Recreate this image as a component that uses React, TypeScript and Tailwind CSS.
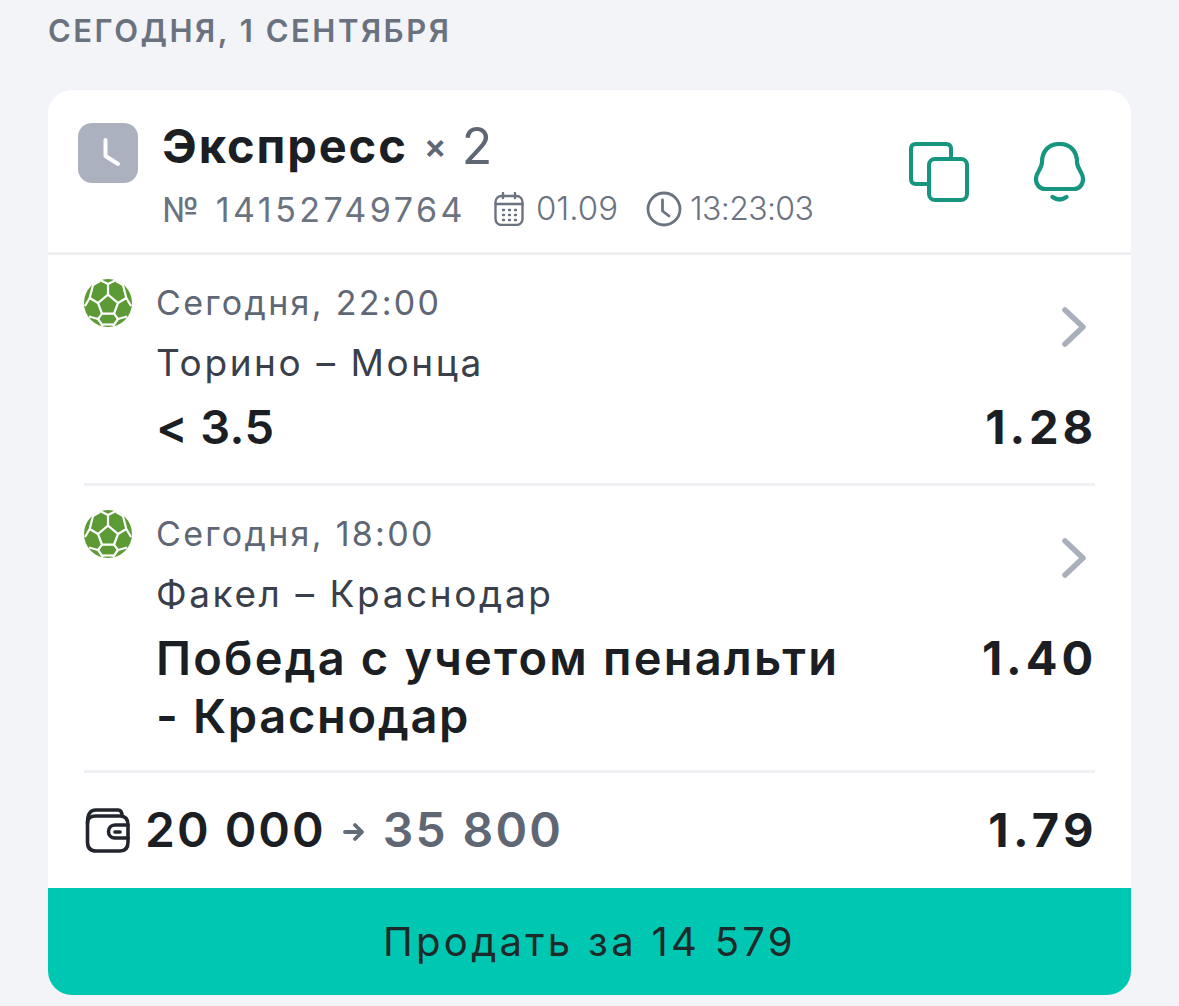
import React from "react";

const font = { fontFamily: '"Inter", "Noto Sans", sans-serif' };

function Ball() {
  return (
    <svg viewBox="0 0 48 48" className="w-12 h-12 shrink-0">
      <circle cx="24" cy="24" r="24" fill="#5c9a35" />
      <g stroke="#ffffff" strokeWidth="2.2" fill="none" strokeLinejoin="round">
        {/* centre panel and spokes */}
        <path d="M24 15.7 L34 24 L30 34.7 L18 34.7 L14 24 Z" />
        <path d="M24 15.7 V5 M14 24 L5.7 19 M34 24 L42.3 19 M18 34.7 L14 40 M30 34.7 L34 40" />
        {/* outer ring of panels */}
        <path d="M15 0.5 L24 5 L33 0.5" />
        <path d="M16 2 L9 6 L5.7 19 L1 27" />
        <path d="M32 2 L39 6 L42.3 19 L47 27" />
        <path d="M5 37.5 L14 40 L19 47 M43 37.5 L34 40 L29 47" />
        <path d="M19 45.5 H29" />
      </g>
    </svg>
  );
}

function Chevron() {
  return (
    <svg viewBox="0 0 26 40" className="w-[26px] h-[40px]" fill="none" stroke="#a9afbb" strokeWidth="5.5" strokeLinecap="round" strokeLinejoin="round">
      <path d="M5 3 L23 20 L5 37" />
    </svg>
  );
}

interface Bet {
  when: string;
  match: string;
  pick: React.ReactNode;
  odds: string;
}

const bets: Bet[] = [
  { when: "Сегодня, 22:00", match: "Торино – Монца", pick: <span className="tracking-[0.4px]">{"< 3.5"}</span>, odds: "1.28" },
  {
    when: "Сегодня, 18:00",
    match: "Факел – Краснодар",
    pick: (
      <>
        Победа с учетом пенальти
        <br />
        <span className="tracking-[1.7px]">- Краснодар</span>
      </>
    ),
    odds: "1.40",
  },
];

function BetRow({ bet }: { bet: Bet }) {
  return (
    <div className="flex border-b-[3px] border-[#eef0f3] pt-[24px] pb-[26px] last:pb-[24px]">
      <Ball />
      <div className="flex-1 ml-[24px] pr-[1px]">
        <div className="flex justify-between">
          <div>
            <div className="text-[34px] leading-[48px] text-[#5f6775] tracking-[2.3px]">{bet.when}</div>
            <div className="text-[37px] leading-[52px] mt-[10px] text-[#3a404b] tracking-[2.6px]">{bet.match}</div>
          </div>
          <div className="mr-[8px] mt-[28px]">
            <Chevron />
          </div>
        </div>
        <div className="flex justify-between items-start mt-[9px]">
          <div className="text-[47px] leading-[58.5px] font-semibold text-[#1b1e23] tracking-[2.2px]">{bet.pick}</div>
          <div className="text-[47px] leading-[58.5px] font-bold text-[#1b1e23] tracking-[3.9px] -mr-[3px]">{bet.odds}</div>
        </div>
      </div>
    </div>
  );
}

export default function App() {
  return (
    <div className="h-[1006px] overflow-hidden bg-[#f2f4f8] px-[48px] pt-[10px]" style={font}>
      <div className="h-[42px] leading-[42px] text-[31px] font-semibold text-[#6a7280] tracking-[2.5px]">
        СЕГОДНЯ, 1 СЕНТЯБРЯ
      </div>
      <div className="mt-[38px] h-[905px] bg-white rounded-[24px] overflow-hidden flex flex-col">
        <div className="h-[165px] shrink-0 border-b-[3px] border-[#eef0f3] flex pl-[30px] pr-[44px] pt-[33px]">
          <div className="w-[60px] h-[60px] rounded-[14px] bg-[#abb1bf] flex items-center justify-center">
            <svg viewBox="0 0 60 60" className="w-[60px] h-[60px]" fill="none" stroke="#ffffff" strokeWidth="4" strokeLinecap="round" strokeLinejoin="round">
              <path d="M27.5 17 V33 L40 41" />
            </svg>
          </div>
          <div className="ml-[24px] flex-1 -mt-[3px]">
            <div className="flex items-center h-[52px] leading-[52px]">
              <span className="text-[47px] font-bold text-[#1b1e23] tracking-[1.9px]">Экспресс</span>
              <span className="ml-[16px] text-[34px] font-semibold text-[#5f6775]">×</span>
              <span className="ml-[15px] text-[50px] text-[#5f6775]">2</span>
            </div>
            <div className="flex items-center mt-[15px] h-[44px] text-[#6c7380]">
              <span className="text-[34px] tracking-[3.5px]">№ 14152749764</span>
              <svg viewBox="0 0 30 34" className="ml-[28px] w-[30px] h-[34px]" fill="none" stroke="#6c7380" strokeWidth="2.4" strokeLinecap="round">
                <rect x="1.5" y="4" width="27" height="29" rx="6" />
                <path d="M1.5 12 H28.5 M9 1 V6 M21 1 V6" />
                <path d="M9 18 h1 M15 18 h1 M21 18 h1 M9 23 h1 M15 23 h1 M21 23 h1 M9 28 h1 M15 28 h1 M21 28 h1" />
              </svg>
              <span className="ml-[12px] text-[33px] font-light tracking-[0px]">01.09</span>
              <svg viewBox="0 0 36 36" className="ml-[28px] w-[36px] h-[36px]" fill="none" stroke="#6c7380" strokeWidth="2.8" strokeLinecap="round" strokeLinejoin="round">
                <circle cx="18" cy="18" r="16" />
                <path d="M16.5 9 V20 L23 25" />
              </svg>
              <span className="ml-[8px] text-[32px] font-light tracking-[-0.02em]">13:23:03</span>
            </div>
          </div>
          <div className="flex gap-[64px] pt-[19px]">
            <svg viewBox="0 0 60 60" className="w-[60px] h-[60px]" fill="none" stroke="#17967f" strokeWidth="4">
              <path d="M42 15 V7 Q42 2 37 2 H7 Q2 2 2 7 V37 Q2 42 7 42 H19" strokeLinecap="round" />
              <rect x="20" y="17" width="38" height="41" rx="6" />
            </svg>
            <svg viewBox="0 0 54 60" className="w-[54px] h-[60px]" fill="none" stroke="#17967f" strokeWidth="4.2" strokeLinecap="round">
              <path d="M26.5 2 C15 2 9 10 9 20 C9 27 3 30 3 37 C3 43 7 47 12 47 H41 C46 47 50 43 50 37 C50 30 44 27 44 20 C44 10 38 2 26.5 2 Z" />
              <path d="M19.5 55 Q26.5 60 33.5 55" />
            </svg>
          </div>
        </div>

        <div className="mx-[36px]">
          {bets.map((bet) => (
            <BetRow key={bet.odds} bet={bet} />
          ))}
        </div>

        <div className="flex-1 mx-[36px] flex items-center justify-between">
          <div className="flex items-center">
            <svg viewBox="0 0 46 46" className="w-[46px] h-[46px]" fill="none" stroke="#22262c" strokeWidth="3.6" strokeLinecap="round" strokeLinejoin="round">
              <path d="M3.5 16 C3.5 7 6 3 12 3 H34 C37 3 38 5 38 9" />
              <path d="M44 18 V35 C44 41 41 44 36 44 H12 C6 44 3.5 41 3.5 35 V16 C3.5 11 7 9 12 9 H36 C41 9 44 12 44 18" />
              <path d="M44 18 H31 C27 18 24.5 21 24.5 24.5 C24.5 28 27 31 31 31 H44" />
              <path d="M31 25 H36" />
            </svg>
            <span className="ml-[15px] text-[48px] font-semibold text-[#1b1e23] tracking-[2px]">20 000</span>
            <svg viewBox="0 0 22 20" className="ml-[17px] mt-[4px] w-[22px] h-[20px]" fill="none" stroke="#636b78" strokeWidth="3.8" strokeLinecap="round" strokeLinejoin="round">
              <path d="M2 10 H19 M12 3 L19 10 L12 17" />
            </svg>
            <span className="ml-[18px] text-[48px] font-semibold text-[#5f6775] tracking-[2.3px]">35 800</span>
          </div>
          <span className="text-[47px] font-bold text-[#1b1e23] tracking-[4.4px] -mr-[3px]">1.79</span>
        </div>

        <div className="h-[107px] shrink-0 bg-[#00c7b1] flex items-center justify-center text-[40px] text-[#1c2a2a] tracking-[3.3px]">
          Продать за 14 579
        </div>
      </div>
    </div>
  );
}
